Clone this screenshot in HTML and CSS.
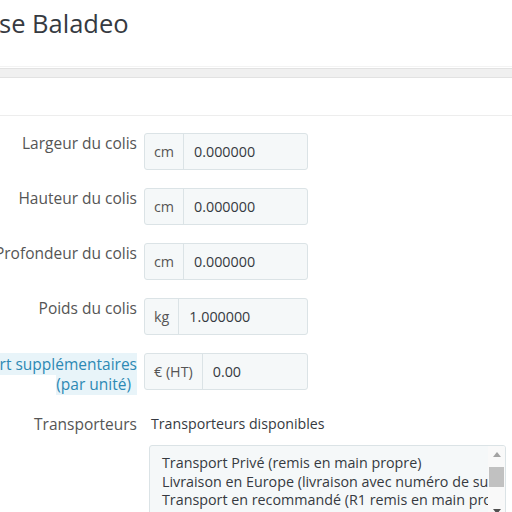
FILE: index.html
```html
<!DOCTYPE html>
<html lang="fr">
<head>
<meta charset="utf-8">
<title>Baladeo</title>
<link rel="stylesheet" href="styles.css">
</head>
<body>
<header class="head">
  <h1 class="title">se Baladeo</h1>
</header>
<div class="tabs"><div class="tabs-bar"></div></div>
<div class="panel-top"></div>
<form class="form">
  <div class="row">
    <label class="lbl">Largeur du colis</label>
    <div class="group"><span class="addon">cm</span><span class="val">0.000000</span></div>
  </div>
  <div class="row">
    <label class="lbl">Hauteur du colis</label>
    <div class="group"><span class="addon">cm</span><span class="val">0.000000</span></div>
  </div>
  <div class="row">
    <label class="lbl">Profondeur du colis</label>
    <div class="group"><span class="addon">cm</span><span class="val">0.000000</span></div>
  </div>
  <div class="row">
    <label class="lbl">Poids du colis</label>
    <div class="group"><span class="addon">kg</span><span class="val">1.000000</span></div>
  </div>
  <div class="row">
    <label class="lbl lbl-tip"><span class="tip">Frais de port supplémentaires (par unité)</span></label>
    <div class="group"><span class="addon">€ (HT)</span><span class="val">0.00</span></div>
  </div>
  <div class="row row-carriers">
    <label class="lbl">Transporteurs</label>
    <div class="carriers">
      <p class="sub">Transporteurs disponibles</p>
      <div class="listbox">
        <div class="options">
          <div class="opt">Transport Privé (remis en main propre)</div>
          <div class="opt">Livraison en Europe (livraison avec numéro de suivi)</div>
          <div class="opt">Transport en recommandé (R1 remis en main propre)</div>
          <div class="opt">Colissimo</div>
        </div>
        <div class="sbar">
          <div class="sbtn"><svg width="8" height="5" viewBox="0 0 8 5"><path d="M0 5 L4 0 L8 5 Z" fill="#a3a3a3"/></svg></div>
          <div class="strack"><div class="sthumb"></div></div>
          <div class="sbtn"><svg width="8" height="5" viewBox="0 0 8 5"><path d="M0 0 L8 0 L4 5 Z" fill="#505050"/></svg></div>
        </div>
      </div>
    </div>
  </div>
</form>
</body>
</html>
```
FILE: styles.css
```css
html, body {
  margin: 0;
  padding: 0;
  background: #fff;
  overflow: hidden;
}
body {
  font-family: "Open Sans", "Noto Sans", sans-serif;
  color: #363a41;
  width: 512px;
}
.head {
  height: 66px;
  box-sizing: border-box;
  padding-top: 8px;
}
.title {
  margin: 0 0 0 -1px;
  font-size: 25.5px;
  line-height: 30px;
  font-weight: 400;
  color: #363a41;
  white-space: nowrap;
}
.tabs {
  border-top: 1px solid #f3f3f3;
  padding-top: 1px;
}
.tabs-bar {
  height: 8px;
  background: #f0f0f0;
  border-top: 1px solid #e2e2e2;
  border-bottom: 1px solid #e2e2e2;
}
.panel-top {
  height: 37px;
  border-bottom: 1px solid #ededed;
}
.form {
  margin: 0 0 0 -85px;
  padding-top: 17px;
}
.row {
  display: flex;
  gap: 7px;
  margin-bottom: 18px;
  align-items: flex-start;
}
.lbl {
  flex: 0 0 222px;
  width: 222px;
  text-align: right;
  font-size: 15.5px;
  line-height: 20px;
  padding-top: 0;
  color: #555;
}
.lbl-tip {
  padding-top: 1px;
}
.tip {
  color: #2d89b4;
  background: #e8f4f9;
  padding-right: 6px;
}
.group {
  width: 164px;
  height: 37px;
  box-sizing: border-box;
  border: 1px solid #dbe3e6;
  border-radius: 3px;
  background: #f5f8f9;
  display: flex;
  align-items: stretch;
  font-size: 14.3px;
}
.addon {
  display: flex;
  align-items: center;
  padding: 0 9px;
  border-right: 1px solid #dbe3e6;
  color: #555;
}
.val {
  display: flex;
  align-items: center;
  padding-left: 10px;
  color: #363a41;
}
.row-carriers {
  padding-top: 2px;
}
.carriers {
  padding-left: 5px;
}
.sub {
  margin: 0 0 11px 2px;
  font-size: 14.2px;
  line-height: 20px;
  color: #363a41;
}
.listbox {
  width: 357px;
  height: 76px;
  box-sizing: border-box;
  border: 1px solid #dbe3e6;
  border-radius: 3px;
  background: #f5f8f9;
  display: flex;
  overflow: hidden;
}
.options {
  flex: 1;
  overflow: hidden;
  padding: 8px 0 0 12px;
  font-size: 14.3px;
  line-height: 18.6px;
  color: #363a41;
}
.opt {
  white-space: nowrap;
}
.sbar {
  flex: 0 0 17px;
  width: 17px;
  background: #f9f9f9;
  display: flex;
  flex-direction: column;
}
.sbtn {
  height: 17px;
  display: flex;
  align-items: center;
  justify-content: center;
}
.strack {
  flex: 1;
  padding: 4px 1px 0;
}
.sthumb {
  height: 20px;
  background: #c1c1c1;
}
```
